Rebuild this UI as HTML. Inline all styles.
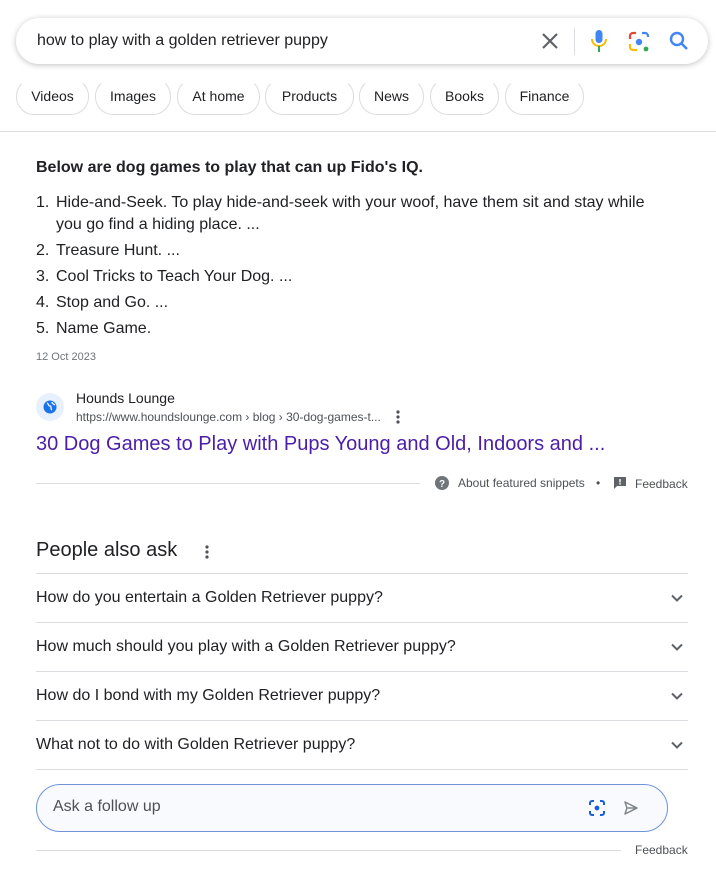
<!DOCTYPE html>
<html><head><meta charset="utf-8"><style>
*{margin:0;padding:0;box-sizing:border-box}
body{width:716px;height:883px;background:#fff;font-family:"Liberation Sans",Arial,sans-serif;color:#202124;position:relative;overflow:hidden}
.abs{position:absolute}
.search{left:16px;top:18px;width:692px;height:46px;border-radius:23px;box-shadow:0 1px 6px rgba(32,33,36,.28);background:#fff}
.q{left:37px;top:32px;font-size:16px;color:#202124}
.chip{position:absolute;top:78px;height:37px;border:1px solid #dadce0;border-radius:18px;font-size:14px;line-height:35px;text-align:center;color:#202124;border-top-color:#fff}
.li{position:absolute;left:36px;font-size:16px;color:#202124;line-height:22px}
.li span{display:inline-block;width:20px}
.row{position:absolute;left:36px;width:652px;height:49px;border-top:1px solid #dadce0;font-size:16px;line-height:48px}
.row svg{position:absolute;right:4px;top:17px}
</style></head><body>
<div class="abs search"></div>
<div class="abs q">how to play with a golden retriever puppy</div>
<svg class="abs" style="left:540px;top:31px" width="20" height="20" viewBox="0 0 20 20"><path d="M3 3L17 17M17 3L3 17" stroke="#5f6368" stroke-width="2.2"/></svg>
<div class="abs" style="left:574px;top:28px;width:1px;height:27px;background:#dadce0"></div>
<svg class="abs" style="left:589px;top:29px" width="20" height="24" viewBox="0 0 20 24"><rect x="6.5" y="1" width="7" height="13" rx="3.5" fill="#4285f4"/><path d="M3 10a7 7 0 0 0 14 0" stroke="#fbbc04" stroke-width="2" fill="none"/><rect x="9" y="17" width="2" height="6" fill="#34a853"/></svg>
<svg class="abs" style="left:628px;top:31px" width="22" height="22" viewBox="0 0 22 22"><path d="M2 8V5a3 3 0 0 1 3-3h3" stroke="#ea4335" stroke-width="2.2" fill="none"/><path d="M14 2h3a3 3 0 0 1 3 3v1" stroke="#4285f4" stroke-width="2.2" fill="none"/><path d="M2 13v3a3 3 0 0 0 3 3h4" stroke="#fbbc04" stroke-width="2.2" fill="none"/><circle cx="11" cy="11" r="3.2" fill="#4285f4"/><circle cx="18" cy="18" r="2.4" fill="#34a853"/></svg>
<svg class="abs" style="left:668px;top:30px" width="22" height="22" viewBox="0 0 22 22"><circle cx="9" cy="9" r="6" stroke="#4285f4" stroke-width="2.4" fill="none"/><path d="M13.5 13.5L19 19" stroke="#4285f4" stroke-width="2.6"/></svg>
<div class="chip" style="left:16px;width:73px">Videos</div>
<div class="chip" style="left:95px;width:76px">Images</div>
<div class="chip" style="left:177px;width:83px">At home</div>
<div class="chip" style="left:265px;width:89px">Products</div>
<div class="chip" style="left:359px;width:65px">News</div>
<div class="chip" style="left:430px;width:69px">Books</div>
<div class="chip" style="left:505px;width:79px">Finance</div>
<div class="abs" style="left:0;top:131px;width:716px;height:1px;background:#dadce0"></div>
<div class="abs" style="left:36px;top:159px;font-size:16px;font-weight:bold">Below are dog games to play that can up Fido's IQ.</div>
<div class="li" style="top:192px;width:660px"><span>1.</span>Hide-and-Seek. To play hide-and-seek with your woof, have them sit and stay while<br><span></span>you go find a hiding place. ...</div>
<div class="li" style="top:240px"><span>2.</span>Treasure Hunt. ...</div>
<div class="li" style="top:266px"><span>3.</span>Cool Tricks to Teach Your Dog. ...</div>
<div class="li" style="top:292px"><span>4.</span>Stop and Go. ...</div>
<div class="li" style="top:318px"><span>5.</span>Name Game.</div>
<div class="abs" style="left:36px;top:351px;font-size:11px;color:#70757a">12 Oct 2023</div>
<div class="abs" style="left:36px;top:393px;width:28px;height:28px;border-radius:50%;background:#e8f0fe"></div>
<svg class="abs" style="left:43px;top:400px" width="14" height="14" viewBox="0 0 14 14"><circle cx="7" cy="7" r="6.5" fill="#1a73e8"/><path d="M4 3c2 1 1 3 3 3s0 3 2 4M9 2c0 2 2 2 3 3" stroke="#e8f0fe" stroke-width="1.4" fill="none"/></svg>
<div class="abs" style="left:76px;top:390px;font-size:14px">Hounds Lounge</div>
<div class="abs" style="left:76px;top:410px;font-size:12px;color:#4d5156">https://www.houndslounge.com › blog › 30-dog-games-t...</div>
<svg class="abs" style="left:396px;top:409px" width="4" height="16" viewBox="0 0 4 16"><circle cx="2" cy="3" r="1.6" fill="#4d5156"/><circle cx="2" cy="8" r="1.6" fill="#4d5156"/><circle cx="2" cy="13" r="1.6" fill="#4d5156"/></svg>
<div class="abs" style="left:36px;top:433px;font-size:20px;color:#4a1ea8">30 Dog Games to Play with Pups Young and Old, Indoors and ...</div>
<div class="abs" style="left:36px;top:483px;width:384px;height:1px;background:#dadce0"></div>
<svg class="abs" style="left:435px;top:476px" width="14" height="14" viewBox="0 0 14 14"><circle cx="7" cy="7" r="7" fill="#70757a"/><text x="7" y="11" font-size="10" font-weight="bold" fill="#fff" text-anchor="middle" font-family="Liberation Sans">?</text></svg>
<div class="abs" style="left:458px;top:476px;font-size:12px;color:#4d5156">About featured snippets</div>
<div class="abs" style="left:596px;top:476px;font-size:12px;color:#4d5156">•</div>
<svg class="abs" style="left:614px;top:477px" width="12" height="13" viewBox="0 0 12 13"><path d="M0 0h12v9H3l-3 3z" fill="#5f6368"/><rect x="5.3" y="2" width="1.4" height="3.5" fill="#fff"/><rect x="5.3" y="6.2" width="1.4" height="1.4" fill="#fff"/></svg>
<div class="abs" style="left:635px;top:477px;font-size:12px;color:#4d5156">Feedback</div>
<div class="abs" style="left:36px;top:539px;font-size:20px">People also ask</div>
<svg class="abs" style="left:205px;top:544px" width="4" height="16" viewBox="0 0 4 16"><circle cx="2" cy="3" r="1.6" fill="#4d5156"/><circle cx="2" cy="8" r="1.6" fill="#4d5156"/><circle cx="2" cy="13" r="1.6" fill="#4d5156"/></svg>
<div class="row" style="top:573px">How do you entertain a Golden Retriever puppy?<svg width="14" height="14" viewBox="0 0 14 14"><path d="M2 4.5l5 5 5-5" stroke="#5f6368" stroke-width="2" fill="none"/></svg></div>
<div class="row" style="top:622px">How much should you play with a Golden Retriever puppy?<svg width="14" height="14" viewBox="0 0 14 14"><path d="M2 4.5l5 5 5-5" stroke="#5f6368" stroke-width="2" fill="none"/></svg></div>
<div class="row" style="top:671px">How do I bond with my Golden Retriever puppy?<svg width="14" height="14" viewBox="0 0 14 14"><path d="M2 4.5l5 5 5-5" stroke="#5f6368" stroke-width="2" fill="none"/></svg></div>
<div class="row" style="top:720px">What not to do with Golden Retriever puppy?<svg width="14" height="14" viewBox="0 0 14 14"><path d="M2 4.5l5 5 5-5" stroke="#5f6368" stroke-width="2" fill="none"/></svg></div>
<div class="abs" style="left:36px;top:769px;width:652px;height:1px;background:#dadce0"></div>
<div class="abs" style="left:36px;top:784px;width:632px;height:48px;border:1px solid #6f93d9;border-radius:24px;background:#f8fafe"></div>
<div class="abs" style="left:53px;top:798px;font-size:16px;color:#4d5156">Ask a follow up</div>
<svg class="abs" style="left:588px;top:799px" width="18" height="18" viewBox="0 0 18 18"><path d="M2 6V4a2 2 0 0 1 2-2h2M12 2h2a2 2 0 0 1 2 2v2M2 12v2a2 2 0 0 0 2 2h2M12 16h2a2 2 0 0 0 2-2v-2" stroke="#1a5fd8" stroke-width="2" fill="none"/><circle cx="9" cy="9" r="2.4" fill="#1a5fd8"/></svg>
<svg class="abs" style="left:623px;top:800px" width="16" height="16" viewBox="0 0 16 16"><path d="M2 2l12 6-12 6 2-6zM4 8h9" stroke="#80868b" stroke-width="1.5" fill="none" stroke-linejoin="round"/></svg>
<div class="abs" style="left:36px;top:850px;width:585px;height:1px;background:#dadce0"></div>
<div class="abs" style="left:635px;top:843px;font-size:12px;color:#4d5156">Feedback</div>
</body></html>
